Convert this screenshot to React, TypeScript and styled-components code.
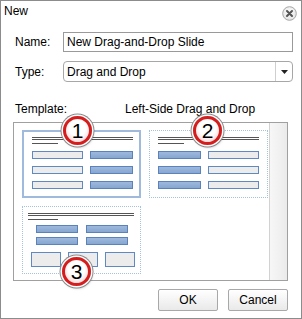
import styled, { createGlobalStyle } from 'styled-components';

const GlobalStyle = createGlobalStyle`
  html, body {
    margin: 0;
    padding: 0;
    background: #ffffff;
  }
  body {
    font-family: 'Liberation Sans', Arial, sans-serif;
    font-size: 12px;
    color: #000;
  }
`;

const Dialog = styled.div`
  width: 302px;
  height: 319px;
  box-sizing: border-box;
  border: 1px solid #8c8c8c;
  background: #fff;
  display: flex;
  flex-direction: column;
`;

const TitleBar = styled.div`
  height: 26px;
  box-sizing: border-box;
  padding: 3px 4px 0 3px;
  display: flex;
  justify-content: space-between;
  align-items: flex-start;
`;

const Title = styled.span`
  line-height: 14px;
  font-size: 12px;
`;

const CloseButton = styled.button`
  margin-top: 2px;
  width: 15px;
  height: 15px;
  padding: 0;
  border: none;
  background: none;
  display: flex;
`;

const Body = styled.div`
  padding: 5px 8px 0 14px;
  display: flex;
  flex-direction: column;
`;

const FieldRow = styled.div<{ $height: number }>`
  display: flex;
  align-items: center;
  height: ${(p) => p.$height}px;
  & + & {
    margin-top: 9px;
  }
`;

const Label = styled.label`
  width: 48px;
  flex: none;
  line-height: 14px;
`;

const TextInput = styled.input`
  width: 230px;
  height: 20px;
  box-sizing: border-box;
  border: 1px solid #9a9a9a;
  padding: 0 3px;
  font-family: inherit;
  font-size: 12px;
  color: #000;
  outline: none;
`;

const Select = styled.div`
  width: 230px;
  height: 21px;
  box-sizing: border-box;
  border: 1px solid #a7a7a7;
  border-radius: 4px;
  display: flex;
  align-items: stretch;
`;

const SelectValue = styled.span`
  flex: 1;
  padding-left: 3px;
  display: flex;
  align-items: center;
`;

const SelectToggle = styled.span`
  width: 16px;
  border-left: 1px solid #cfcfcf;
  display: flex;
  align-items: center;
  justify-content: center;
`;

const TemplateHeader = styled.div`
  margin-top: 20px;
  display: flex;
  line-height: 14px;
`;

const HeaderLabel = styled.span`
  width: 110px;
`;

const TemplateBox = styled.div`
  margin: 6px 0 0 -2px;
  width: 275px;
  height: 159px;
  box-sizing: border-box;
  border: 1px solid #a0a0a0;
  display: flex;
`;

const Gallery = styled.div`
  flex: 1;
  padding: 7px 0 0 8px;
  display: flex;
  flex-wrap: wrap;
  align-content: flex-start;
  gap: 8px;
`;

const ScrollTrack = styled.div`
  width: 17px;
  border-left: 1px solid #d2d2d2;
  background: linear-gradient(to right, #f7f7f7, #ebebeb);
`;

const Card = styled.div<{ $selected?: boolean; $pad: string }>`
  position: relative;
  width: 119px;
  height: 68px;
  box-sizing: border-box;
  padding: ${(p) => p.$pad};
  border: ${(p) => (p.$selected ? '2px solid #9fbadc' : '1px dotted #a9c1e0')};
  display: flex;
  flex-direction: column;
`;

const Rule = styled.div<{ $w: number; $gap: number }>`
  width: ${(p) => p.$w}px;
  height: 1px;
  margin-top: ${(p) => p.$gap}px;
  background: #555;
  &:first-child {
    margin-top: 0;
  }
`;

const BlockRow = styled.div<{ $gap: number; $top: number; $indent?: number }>`
  display: flex;
  gap: ${(p) => p.$gap}px;
  margin-top: ${(p) => p.$top}px;
  margin-left: ${(p) => p.$indent ?? 0}px;
`;

const Block = styled.div<{ $w: number; $h?: number; $filled?: boolean }>`
  width: ${(p) => p.$w}px;
  height: ${(p) => p.$h ?? 8}px;
  box-sizing: border-box;
  border: 1px solid ${(p) => (p.$filled ? '#5a83bd' : '#6089c2')};
  background: ${(p) =>
    p.$filled ? 'linear-gradient(#9db8dc, #87a7d0)' : '#ececec'};
`;

const Badge = styled.div<{ $x: number; $y: number }>`
  position: absolute;
  left: ${(p) => p.$x}px;
  top: ${(p) => p.$y}px;
  width: 23px;
  height: 23px;
  border-radius: 50%;
  border: 3px solid #d51d1d;
  background: radial-gradient(circle at 50% 40%, #ffffff 45%, #fbe3e3 70%, #ee9a9a 100%);
  box-shadow: 0 0 0 1.5px #ffffff, 0 0 0 2.5px #8a8a8a, 1px 2px 3px rgba(0, 0, 0, 0.35);
  display: flex;
  align-items: center;
  justify-content: center;
  font-size: 21px;
  line-height: 1;
  color: #000;
  z-index: 2;
`;

const Footer = styled.div`
  margin: 8px 0 0 -2px;
  width: 275px;
  display: flex;
  justify-content: flex-end;
  gap: 10px;
`;

const Button = styled.button`
  width: 60px;
  height: 22px;
  box-sizing: border-box;
  border: 1px solid #a8a8a8;
  border-radius: 2px;
  background: linear-gradient(#ffffff, #e9e9e9);
  font-family: 'Liberation Sans', Arial, sans-serif;
  font-size: 12px;
  color: #000;
  padding: 0;
`;

const CloseIcon = () => (
  <svg width="15" height="15" viewBox="0 0 15 15">
    <defs>
      <radialGradient id="cg" cx="50%" cy="40%" r="60%">
        <stop offset="0%" stopColor="#ffffff" />
        <stop offset="100%" stopColor="#e2e2e2" />
      </radialGradient>
    </defs>
    <circle cx="7.5" cy="7.5" r="6.8" fill="url(#cg)" stroke="#a5a5a5" />
    <path d="M5 5 L10 10 M10 5 L5 10" stroke="#555" strokeWidth="2" strokeLinecap="round" />
  </svg>
);

const ArrowDown = () => (
  <svg width="7" height="4" viewBox="0 0 7 4">
    <polygon points="0,0 7,0 3.5,4" fill="#222" />
  </svg>
);

export default function App() {
  return (
    <>
      <GlobalStyle />
      <Dialog>
        <TitleBar>
          <Title>New</Title>
          <CloseButton aria-label="Close">
            <CloseIcon />
          </CloseButton>
        </TitleBar>
        <Body>
          <FieldRow $height={20}>
            <Label>Name:</Label>
            <TextInput defaultValue="New Drag-and-Drop Slide" />
          </FieldRow>
          <FieldRow $height={21}>
            <Label>Type:</Label>
            <Select>
              <SelectValue>Drag and Drop</SelectValue>
              <SelectToggle>
                <ArrowDown />
              </SelectToggle>
            </Select>
          </FieldRow>

          <TemplateHeader>
            <HeaderLabel>Template:</HeaderLabel>
            <span>Left-Side Drag and Drop</span>
          </TemplateHeader>

          <TemplateBox>
            <Gallery>
              <Card $selected $pad="5px 0 0 8px">
                <Rule $w={101} $gap={0} />
                <Rule $w={101} $gap={1} />
                <Rule $w={26} $gap={3} />
                <BlockRow $gap={7} $top={7}>
                  <Block $w={51} />
                  <Block $w={43} $filled />
                </BlockRow>
                <BlockRow $gap={7} $top={7}>
                  <Block $w={51} />
                  <Block $w={43} $filled />
                </BlockRow>
                <BlockRow $gap={7} $top={7}>
                  <Block $w={51} />
                  <Block $w={43} $filled />
                </BlockRow>
                <Badge $x={39} $y={-16}>1</Badge>
              </Card>

              <Card $pad="6px 0 0 8px">
                <Rule $w={101} $gap={0} />
                <Rule $w={101} $gap={1} />
                <Rule $w={26} $gap={3} />
                <BlockRow $gap={7} $top={7}>
                  <Block $w={43} $filled />
                  <Block $w={51} />
                </BlockRow>
                <BlockRow $gap={7} $top={7}>
                  <Block $w={43} $filled />
                  <Block $w={51} />
                </BlockRow>
                <BlockRow $gap={7} $top={7}>
                  <Block $w={43} $filled />
                  <Block $w={51} />
                </BlockRow>
                <Badge $x={43} $y={-15}>2</Badge>
              </Card>

              <Card $pad="6px 0 0 5px">
                <Rule $w={106} $gap={0} />
                <Rule $w={106} $gap={1} />
                <Rule $w={30} $gap={3} />
                <BlockRow $gap={8} $top={5} $indent={8}>
                  <Block $w={42} $filled />
                  <Block $w={42} $filled />
                </BlockRow>
                <BlockRow $gap={8} $top={4} $indent={8}>
                  <Block $w={42} $filled />
                  <Block $w={42} $filled />
                </BlockRow>
                <BlockRow $gap={7} $top={7} $indent={3}>
                  <Block $w={30} $h={15} />
                  <Block $w={30} $h={15} />
                  <Block $w={30} $h={15} />
                </BlockRow>
                <Badge $x={39} $y={50}>3</Badge>
              </Card>
            </Gallery>
            <ScrollTrack />
          </TemplateBox>

          <Footer>
            <Button>OK</Button>
            <Button>Cancel</Button>
          </Footer>
        </Body>
      </Dialog>
    </>
  );
}
